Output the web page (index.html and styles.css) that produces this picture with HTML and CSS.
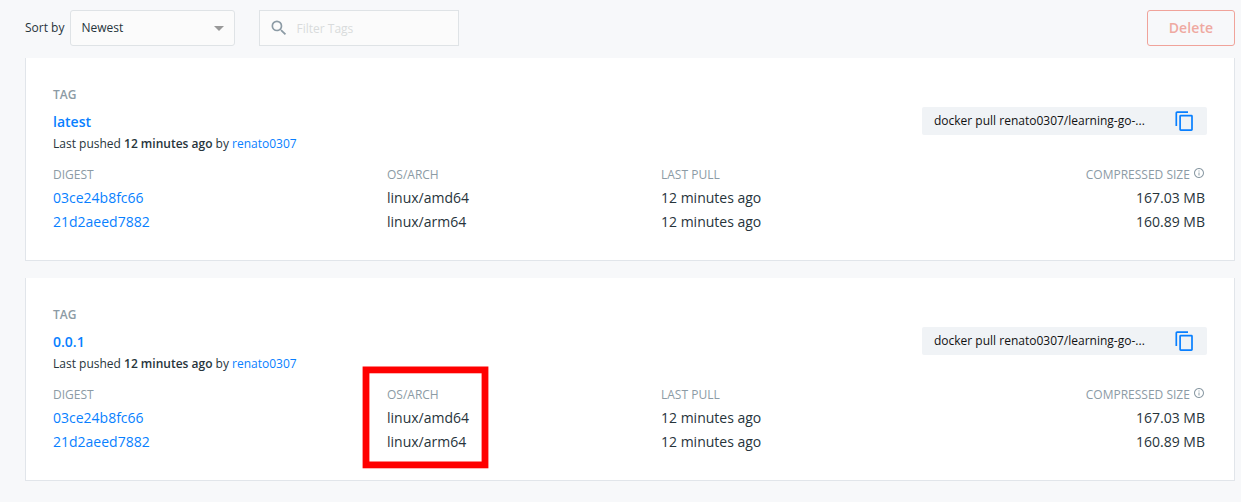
FILE: index.html
```html
<!DOCTYPE html>
<html lang="en">
<head>
<meta charset="utf-8">
<title>Tags</title>
<link rel="stylesheet" href="styles.css">
</head>
<body>
<svg class="sprite" aria-hidden="true">
  <symbol id="copy" viewBox="0 0 22 22"><g fill="none" stroke="currentColor" stroke-width="1.700"><path d="M2.300 16V3.200Q2.300 2.200 3.300 2.200H14"/><rect x="6.100" y="5.700" width="11.900" height="14.500" rx=".6"/></g></symbol>
  <symbol id="info" viewBox="0 0 24 24"><path d="M11 7h2v2h-2zm0 4h2v6h-2zm1-9C6.480 2 2 6.480 2 12s4.480 10 10 10 10-4.480 10-10S17.520 2 12 2zm0 18c-4.410 0-8-3.590-8-8s3.590-8 8-8 8 3.590 8 8-3.590 8-8 8z"/></symbol>
</svg>
<header class="toolbar">
  <span class="sort-label">Sort by</span>
  <div class="select"><span>Newest</span><i class="caret"></i></div>
  <div class="filter">
    <svg class="search-icon" viewBox="0 0 24 24"><path d="M15.500 14h-.79l-.28-.27A6.471 6.471 0 0 0 16 9.500 6.500 6.500 0 1 0 9.500 16c1.610 0 3.090-.59 4.230-1.570l.27.28v.79l5 4.990L20.490 19l-4.990-5zm-6 0C7.010 14 5 11.990 5 9.500S7.010 5 9.500 5 14 7.010 14 9.500 11.990 14 9.500 14z"/></svg>
    <span>Filter Tags</span>
  </div>
  <button class="delete">Delete</button>
</header>
<main class="cards">
  <section class="card">
    <div class="card-head">
      <div>
        <div class="eyebrow">TAG</div>
        <a class="tag-name">latest</a>
        <p class="pushed">Last pushed <b>12 minutes ago</b> by <a>renato0307</a></p>
      </div>
      <div class="pull"><span>docker pull renato0307/learning-go-...</span><svg class="copy-icon"><use href="#copy"/></svg></div>
    </div>
    <div class="grid">
      <span class="th">DIGEST</span><span class="th">OS/ARCH</span><span class="th">LAST PULL</span><span class="th end">COMPRESSED SIZE <svg class="info-icon"><use href="#info"/></svg></span>
      <a>03ce24b8fc66</a><span>linux/amd64</span><span>12 minutes ago</span><span class="end">167.03 MB</span>
      <a>21d2aeed7882</a><span>linux/arm64</span><span>12 minutes ago</span><span class="end">160.89 MB</span>
    </div>
  </section>
  <section class="card">
    <div class="card-head">
      <div>
        <div class="eyebrow">TAG</div>
        <a class="tag-name">0.0.1</a>
        <p class="pushed">Last pushed <b>12 minutes ago</b> by <a>renato0307</a></p>
      </div>
      <div class="pull"><span>docker pull renato0307/learning-go-...</span><svg class="copy-icon"><use href="#copy"/></svg></div>
    </div>
    <div class="grid">
      <span class="th">DIGEST</span><span class="th">OS/ARCH</span><span class="th">LAST PULL</span><span class="th end">COMPRESSED SIZE <svg class="info-icon"><use href="#info"/></svg></span>
      <a>03ce24b8fc66</a><span>linux/amd64</span><span>12 minutes ago</span><span class="end">167.03 MB</span>
      <a>21d2aeed7882</a><span>linux/arm64</span><span>12 minutes ago</span><span class="end">160.89 MB</span>
    </div>
    <svg class="highlight" viewBox="0 0 127 103"><rect x="4" y="3.900" width="119" height="95"/></svg>
  </section>
</main>
</body>
</html>
```
FILE: styles.css
```css
* { box-sizing: border-box; }
body {
  margin: 0;
  height: 502px;
  overflow: hidden;
  padding: 10px 6px 0 25px;
  background: #f7f8fa;
  color: #27343b;
  font: 14px/24px "Open Sans", sans-serif;
}
.sprite { display: none; }
a { color: #087fff; }
.toolbar { display: flex; align-items: center; height: 36px; font-size: 12px; }
.sort-label { width: 45px; white-space: nowrap; }
.select {
  display: flex;
  align-items: center;
  justify-content: space-between;
  width: 165px;
  height: 36px;
  padding: 0 10px 0 10.500px;
  border: 1px solid #dfe3e6;
  border-radius: 3px;
  background: #fbfbfb;
}
.caret { border: 5px solid transparent; border-top-color: #999; border-bottom: 0; }
.filter {
  display: flex;
  align-items: center;
  width: 200px;
  height: 36px;
  margin-left: 24px;
  padding: 2px 0 0 9px;
  border: 1px solid #dfe3e6;
  background: #fbfbfb;
  color: #d9dbdc;
}
.search-icon { width: 20px; height: 20px; margin: -3px 7.500px 0 0; fill: #8c9ba5; }
.delete {
  width: 88px;
  height: 36px;
  margin-left: auto;
  padding: 0 0 2px;
  border: 1px solid #f0a39a;
  border-radius: 3px;
  background: transparent;
  color: #efa9a1;
  font: 600 14px "Open Sans", sans-serif;
  letter-spacing: .1px;
}
.cards { display: grid; gap: 17px; margin-top: 12px; }
.card {
  position: relative;
  height: 203px;
  padding: 28px 27px 0;
  border: 1px solid #e1e5ea;
  border-top: 0;
  background: #fff;
}
.card-head { display: flex; justify-content: space-between; height: 80px; }
.eyebrow { color: #8c9ba5; font-size: 12px; font-weight: 600; line-height: 18px; }
.tag-name { display: block; margin-top: 7px; font-weight: 600; line-height: 22px; }
.pushed { margin: 2px 0 0; font-size: 12px; line-height: 18px; }
.pushed b { font-weight: 600; }
.pull {
  display: flex;
  align-items: center;
  justify-content: space-between;
  width: 285px;
  height: 28px;
  margin-top: 21px;
  padding: 0 11px 0 12px;
  border-radius: 2px;
  background: #f0f3f6;
  color: #111;
  font-size: 12px;
}
.copy-icon { width: 22px; height: 22px; color: #087fff; }
.grid { display: grid; grid-template-columns: 334px 274px 1fr 160px; grid-template-rows: 20px 24px 24px; padding-right: 2px; }
.th { color: #8c9ba5; font-size: 12px; line-height: 18px; }
.end { text-align: right; white-space: nowrap; }
.info-icon { width: 12px; height: 12px; fill: #8c9ba5; }
.highlight { position: absolute; left: 336px; top: 88px; width: 127px; height: 103px; fill: none; stroke: #f00; stroke-width: 6.800px; }
```
